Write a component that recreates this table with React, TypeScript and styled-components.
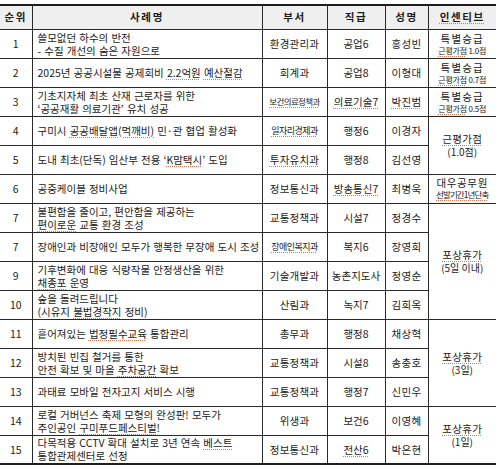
import React from "react";
import styled, { createGlobalStyle } from "styled-components";

const GlobalStyle = createGlobalStyle`
  html, body {
    margin: 0;
    padding: 0;
    background: #ffffff;
  }
  body {
    font-family: "Noto Sans CJK KR", "Noto Sans", sans-serif;
    color: #1b1b1b;
  }
`;

const Page = styled.div`
  padding-top: 4px;
`;

const Table = styled.table`
  width: 496px;
  border-collapse: collapse;
  table-layout: fixed;
  border-top: 2px solid #1e1e1e;
  border-bottom: 2px solid #1e1e1e;
`;

const HeadRow = styled.tr`
  height: 24px;
`;

const BodyRow = styled.tr`
  height: 29px;
`;

const HeadCell = styled.th`
  padding: 0;
  background: #efefef;
  border: 1px solid #2a2a2a;
  border-top: none;
  font-size: 10.5px;
  font-weight: 700;
  letter-spacing: 1.6px;
  line-height: 1;
  text-align: center;
  &:first-child {
    border-left: none;
  }
  &:last-child {
    border-right: none;
  }
`;

const Cell = styled.td<{ $left?: boolean; $size?: number; $track?: number }>`
  padding: ${({ $left }) => ($left ? "0 0 0 5px" : "0")};
  border: 1px solid #2a2a2a;
  font-size: ${({ $size }) => $size ?? 10.5}px;
  letter-spacing: ${({ $track }) => $track ?? 0}px;
  word-spacing: ${({ $left }) => ($left ? "0.8px" : "0")};
  line-height: 13px;
  text-align: ${({ $left }) => ($left ? "left" : "center")};
  vertical-align: middle;
  white-space: nowrap;
  overflow: hidden;
  &:first-child {
    border-left: none;
  }
  &:last-child {
    border-right: none;
  }
`;

const Line = styled.div`
  display: block;
`;

const Main = styled.div<{ $track?: number }>`
  font-size: 10.5px;
  letter-spacing: ${({ $track }) => $track ?? 1.2}px;
  line-height: 13px;
`;

const Sub = styled.div<{ $size?: number; $track?: number }>`
  font-size: ${({ $size }) => $size ?? 8}px;
  letter-spacing: ${({ $track }) => $track ?? -0.2}px;
  line-height: ${({ $size }) => ($size ?? 8) + 3}px;
`;

const Spell = styled.span`
  text-decoration: underline dotted #e8704a;
  text-decoration-thickness: 1px;
  text-underline-offset: 1.5px;
`;

type Award = {
  span: number;
  main: React.ReactNode;
  sub: React.ReactNode;
  subSize?: number;
  mainTrack?: number;
  subTrack?: number;
};

type Row = {
  no: string;
  title: React.ReactNode[];
  dept: React.ReactNode;
  deptSize?: number;
  deptTrack?: number;
  grade: React.ReactNode;
  name: React.ReactNode;
  award?: Award;
};

const rows: Row[] = [
  {
    no: "1",
    title: ["쓸모없던 하수의 반전", "- 수질 개선의 숨은 자원으로"],
    dept: "환경관리과",
    grade: "공업6",
    name: "홍성빈",
    award: {
      span: 1,
      main: "특별승급",
      sub: (
        <>
          <Spell>근평가점</Spell> 1.0점
        </>
      ),
    },
  },
  {
    no: "2",
    title: [
      <>
        2025년 공공시설물 공제회비 <Spell>2.2억원</Spell> <Spell>예산절감</Spell>
      </>,
    ],
    dept: "회계과",
    grade: "공업8",
    name: "이형대",
    award: {
      span: 1,
      main: "특별승급",
      sub: (
        <>
          <Spell>근평가점</Spell> 0.7점
        </>
      ),
    },
  },
  {
    no: "3",
    title: ["기초지자체 최초 산재 근로자를 위한", "‘공공재활 의료기관’ 유치 성공"],
    dept: <Spell>보건의료정책과</Spell>,
    deptSize: 8.5,
    deptTrack: -0.6,
    grade: <Spell>의료기술7</Spell>,
    name: <Spell>박진범</Spell>,
    award: {
      span: 1,
      main: "특별승급",
      sub: (
        <>
          <Spell>근평가점</Spell> 0.5점
        </>
      ),
    },
  },
  {
    no: "4",
    title: [
      <>
        구미시 <Spell>공공배달앱(먹깨비)</Spell> 민·관 협업 활성화
      </>,
    ],
    dept: <Spell>일자리경제과</Spell>,
    deptSize: 9,
    deptTrack: -0.5,
    grade: "행정6",
    name: "이경자",
    award: {
      span: 2,
      main: <Spell>근평가점</Spell>,
      sub: "(1.0점)",
      subSize: 10,
      mainTrack: 0.4,
      subTrack: 0,
    },
  },
  {
    no: "5",
    title: [
      <>
        도내 최초(단독) 임산부 전용 ‘<Spell>K맘택시</Spell>’ 도입
      </>,
    ],
    dept: <Spell>투자유치과</Spell>,
    grade: "행정8",
    name: "김선영",
  },
  {
    no: "6",
    title: ["공중케이블 정비사업"],
    dept: "정보통신과",
    grade: <Spell>방송통신7</Spell>,
    name: "최병욱",
    award: {
      span: 1,
      main: "대우공무원",
      sub: <Spell>선발기간1년단축</Spell>,
      subSize: 8.5,
      mainTrack: 0.6,
      subTrack: -0.9,
    },
  },
  {
    no: "7",
    title: [
      "불편함을 줄이고, 편안함을 제공하는",
      <>
        <Spell>편이로운</Spell> 교통 환경 조성
      </>,
    ],
    dept: "교통정책과",
    grade: "시설7",
    name: "정경수",
    award: {
      span: 4,
      main: <Spell>포상휴가</Spell>,
      sub: "(5일 이내)",
      subSize: 10,
      mainTrack: 0.4,
      subTrack: 0,
    },
  },
  {
    no: "7",
    title: ["장애인과 비장애인 모두가 행복한 무장애 도시 조성"],
    dept: <Spell>장애인복지과</Spell>,
    deptSize: 9,
    deptTrack: -0.5,
    grade: "복지6",
    name: "장영희",
  },
  {
    no: "9",
    title: [
      "기후변화에 대응 식량작물 안정생산을 위한",
      <>
        <Spell>채종포</Spell> 운영
      </>,
    ],
    dept: "기술개발과",
    grade: "농촌지도사",
    name: "정영순",
  },
  {
    no: "10",
    title: [
      "숲을 돌려드립니다",
      <>
        (시유지 <Spell>불법경작지</Spell> 정비)
      </>,
    ],
    dept: "산림과",
    grade: "녹지7",
    name: "김희옥",
  },
  {
    no: "11",
    title: [
      <>
        흩어져있는 <Spell>법정필수교육</Spell> 통합관리
      </>,
    ],
    dept: "총무과",
    grade: "행정8",
    name: "채상혁",
    award: {
      span: 3,
      main: <Spell>포상휴가</Spell>,
      sub: "(3일)",
      subSize: 10,
      mainTrack: 0.4,
      subTrack: 0,
    },
  },
  {
    no: "12",
    title: [
      "방치된 빈집 철거를 통한",
      <>
        안전 확보 및 마을 <Spell>주차공간</Spell> 확보
      </>,
    ],
    dept: "교통정책과",
    grade: "시설8",
    name: "송충호",
  },
  {
    no: "13",
    title: ["과태료 모바일 전자고지 서비스 시행"],
    dept: "교통정책과",
    grade: "행정7",
    name: "신민우",
  },
  {
    no: "14",
    title: [
      "로컬 거버넌스 축제 모형의 완성판! 모두가",
      <>
        주인공인 <Spell>구미푸드페스티벌</Spell>!
      </>,
    ],
    dept: "위생과",
    grade: "보건6",
    name: "이영혜",
    award: {
      span: 2,
      main: <Spell>포상휴가</Spell>,
      sub: "(1일)",
      subSize: 10,
      mainTrack: 0.4,
      subTrack: 0,
    },
  },
  {
    no: "15",
    title: [
      <>
        다목적용 CCTV 확대 설치로 3년 연속 <Spell>베스트</Spell>
      </>,
      "통합관제센터로 선정",
    ],
    dept: "정보통신과",
    grade: <Spell>전산6</Spell>,
    name: "박은현",
  },
];

const columns = [32, 230, 65, 58, 43, 68];
const headers = ["순위", "사례명", "부서", "직급", "성명", "인센티브"];

export default function App() {
  return (
    <Page>
      <GlobalStyle />
      <Table>
        <colgroup>
          {columns.map((w, i) => (
            <col key={i} style={{ width: w }} />
          ))}
        </colgroup>
        <thead>
          <HeadRow>
            {headers.map((h) => (
              <HeadCell key={h}>{h === "인센티브" ? <Spell>{h}</Spell> : h}</HeadCell>
            ))}
          </HeadRow>
        </thead>
        <tbody>
          {rows.map((r, i) => (
            <BodyRow key={i}>
              <Cell>{r.no}</Cell>
              <Cell $left>
                {r.title.map((t, j) => (
                  <Line key={j}>{t}</Line>
                ))}
              </Cell>
              <Cell $size={r.deptSize} $track={r.deptTrack ?? 0.2}>
                {r.dept}
              </Cell>
              <Cell>{r.grade}</Cell>
              <Cell $track={0.3}>{r.name}</Cell>
              {r.award && (
                <Cell rowSpan={r.award.span}>
                  <Main $track={r.award.mainTrack}>{r.award.main}</Main>
                  <Sub $size={r.award.subSize} $track={r.award.subTrack}>
                    {r.award.sub}
                  </Sub>
                </Cell>
              )}
            </BodyRow>
          ))}
        </tbody>
      </Table>
    </Page>
  );
}
